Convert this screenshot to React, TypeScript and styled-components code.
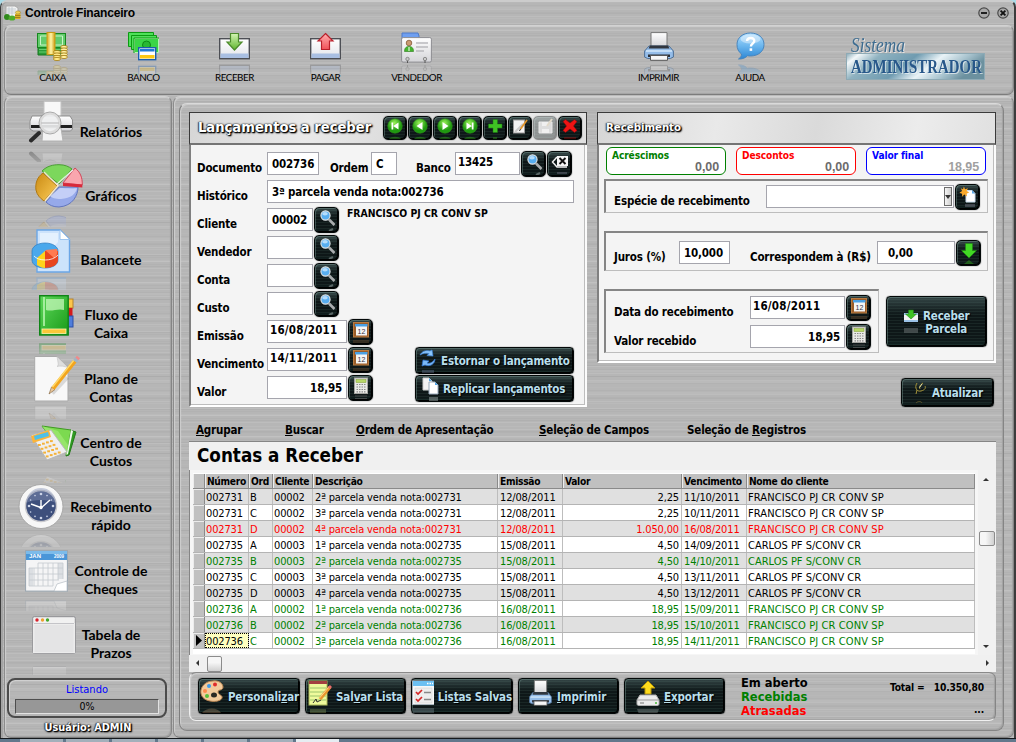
import React from 'react';
import styled, { createGlobalStyle, css } from 'styled-components';

const ui = `"DejaVu Sans Condensed", "DejaVu Sans", sans-serif`;

const metal = css`
  background-color: #b6b6b6;
  background-image: repeating-linear-gradient(180deg, rgba(255, 255, 255, 0.1) 0 1px, transparent 1px 3px, rgba(0, 0, 0, 0.025) 3px 4px, transparent 4px 7px),
    repeating-linear-gradient(180deg, rgba(0, 0, 0, 0.035) 0 1px, transparent 1px 5px, rgba(255, 255, 255, 0.06) 5px 7px, transparent 7px 11px);
`;

const bevel = css`
  border: 1px solid;
  border-color: #d2d2d2 #858585 #7c7c7c #8c8c8c;
  box-shadow: inset 1px 1px 1px #cfcfcf, inset -1px -1px 1px #a2a2a2;
`;

const GlobalStyle = createGlobalStyle`
  * { box-sizing: border-box; }
  body { margin: 0; background: #62788c; overflow: hidden; }
  svg { display: block; flex: none; }
`;

const Screen = styled.div`
  width: 1016px;
  height: 742px;
  background: #a9dbe8;
  font: 11px/13px ${ui};
  color: #000;
  white-space: nowrap;
`;

const Window = styled.div`
  ${metal}
  height: 738px;
  border: solid;
  border-width: 2px 2px 0 1px;
  border-color: #cccccc #3c3c3c #3c3c3c #3c3c3c;
  border-radius: 7px 7px 0 0;
  box-shadow: inset 2px 0 0 #a4a4a4;
  display: flex;
  flex-direction: column;
`;

const TitleBar = styled.header`
  height: 23px;
  flex: none;
  display: flex;
  align-items: center;
  padding: 0 5px 1px 3px;
  gap: 4px;
`;

const WindowTitle = styled.h1`
  flex: 1;
  margin: 0;
  font: bold 12px/14px 'Liberation Sans', sans-serif;
  letter-spacing: -0.18px;
`;

const CaptionButtons = styled.div`
  display: flex;
  gap: 7px;
`;

const ToolbarPanel = styled.nav`
  ${bevel}
  height: 70px;
  flex: none;
  margin: 0 0 1px 3px;
  border-radius: 7px;
  display: flex;
  padding: 6px 0 0 2px;
`;

const Tool = styled.div<{ $before?: number; $w?: number }>`
  width: ${(p) => p.$w ?? 91}px;
  margin-left: ${(p) => p.$before ?? 0}px;
  display: flex;
  flex-direction: column;
  align-items: center;
  font: 9.8px/12px Lato, sans-serif;
  letter-spacing: -0.45px;
`;

const ToolIcon = styled.div`
  height: 39px;
`;

const Mirror = styled.div<{ $gap: number; $h: number }>`
  margin-top: ${(p) => p.$gap}px;
  height: ${(p) => p.$h}px;
  overflow: hidden;
  opacity: 0.33;
  mask-image: linear-gradient(#000, rgba(0, 0, 0, 0.45));
  svg {
    transform: scaleY(-1);
  }
`;

const LogoBox = styled.div`
  margin: 3px 0 0 50px;
`;

const LogoArt = styled.svg`
  overflow: visible;
  text {
    font-family: 'Liberation Serif', serif;
    filter: drop-shadow(1px 1px 0 rgba(255, 255, 255, 0.6));
  }
`;

const Body = styled.div`
  display: flex;
  flex: 1;
`;

const Sidebar = styled.aside`
  ${bevel}
  width: 169px;
  margin-left: 3px;
  border-radius: 7px;
  padding-top: 3px;
`;

const SideItem = styled.div`
  height: 64px;
  display: grid;
  grid-template-columns: 61px 90px;
`;

const SideIcon = styled.div<{ $x: number; $y: number }>`
  margin: ${(p) => p.$y}px 0 0 ${(p) => p.$x}px;
`;

const SideLabel = styled.div`
  font: bold 14px/18px Lato, sans-serif;
  letter-spacing: -0.02px;
  text-align: center;
  align-self: center;
  white-space: pre-line;
`;

const StatusBox = styled.div`
  width: 160px;
  height: 40px;
  margin: 2px 0 0 2px;
  border: 2px solid #4b4b4b;
  border-radius: 8px;
  padding: 3px 6px;
  text-align: center;
  color: #0000ff;
  box-shadow: inset 1px 1px 0 #d0d0d0;
`;

const Progress = styled.div`
  margin-top: 3px;
  height: 15px;
  background: #979797;
  border: 1px solid;
  border-color: #4e4e4e #e2e2e2 #e2e2e2 #4e4e4e;
  color: #000;
  font-size: 10.5px;
`;

const glow = css`
  color: #fff;
  text-shadow: 1px 1px 1px #000, 1px 1px 2px #000, 0 0 2px #222, -1px 0 1px #555;
`;

const UserLine = styled.div`
  ${glow}
  margin-top: 3px;
  font-size: 10.9px;
  font-weight: bold;
  text-align: center;
`;

const Main = styled.main`
  ${bevel}
  margin-left: 1px;
  flex: 1;
  border-radius: 7px;
  padding: 6px 9px 6px 5px;
`;

const Frame = styled.section`
  ${bevel}
  height: 628px;
  border-color: #dadada #858585 #858585 #7d7d7d;
  border-radius: 8px;
  padding: 8px 7px 0 9px;
`;

const Upper = styled.div`
  display: flex;
  gap: 10px;
  height: 311px;
`;

const RightColumn = styled.div`
  width: 399px;
  display: flex;
  flex-direction: column;
`;

const Panel = styled.section<{ $w: number; $h: number }>`
  width: ${(p) => p.$w}px;
  height: ${(p) => p.$h}px;
  background: #f4f4f4;
  border: solid;
  border-width: 0 2px 2px 2px;
  border-color: #fff #fbfbfb #fff #808080;
  box-shadow: inset -1px -1px 0 #bdbdbd;
`;

const PanelHeader = styled.header<{ $size: number; $lift?: number }>`
  height: 33px;
  margin: 0 -2px 0 -2px;
  display: flex;
  align-items: center;
  padding: 0 4px 1px 8px;
  background: linear-gradient(100deg, #d6d6d6, #e9e9e9 30%, #dadada 55%, #ececec 80%, #e0e0e0);
  border: 1px solid #3a3a3a;
  border-bottom: 2px solid #747474;
  h2 {
    ${glow}
    margin: 0;
    flex: 1;
    padding-bottom: ${(p) => p.$lift ?? 0}px;
    font: bold ${(p) => p.$size}px/17px ${ui};
  }
`;

const dark = css`
  border: 1px solid #030808;
  background: linear-gradient(180deg, rgba(110, 140, 140, 0.4), rgba(60, 80, 80, 0.16) 28%, transparent 38%, transparent 84%, rgba(30, 80, 70, 0.22)),
    repeating-linear-gradient(180deg, #0e1718 0 2px, #192625 2px 3px);
  box-shadow: inset 1px 1px 0 rgba(120, 150, 145, 0.45), inset -1px -1px 0 #000, 0 0 1px #000;
`;

const NavButtons = styled.div`
  display: flex;
  gap: 1px;
`;

const IconButton = styled.div<{ $off?: boolean; $nav?: boolean }>`
  ${dark}
  width: ${(p) => (p.$nav ? 24 : 25)}px;
  height: ${(p) => (p.$nav ? 24 : 26)}px;
  flex: none;
  border-radius: 5px;
  display: flex;
  justify-content: center;
  padding-top: ${(p) => (p.$nav ? 0 : 1)}px;
  opacity: ${(p) => (p.$off ? 0.4 : 1)};
`;

const Form = styled.div`
  padding: 7px 0 0 6px;
`;

const FormRow = styled.div`
  height: 28px;
  display: flex;
`;

const Label = styled.label<{ $w: number; $left?: number }>`
  width: ${(p) => p.$w}px;
  margin-left: ${(p) => p.$left ?? 0}px;
  padding-top: 10px;
  font-weight: bold;
  font-size: 11.5px;
  letter-spacing: -0.17px;
  flex: none;
`;

const Field = styled.div<{ $w: number; $right?: boolean; $date?: boolean; $pad?: number; $up?: boolean }>`
  width: ${(p) => p.$w}px;
  height: 23px;
  flex: none;
  background: #fff;
  border: 1px solid #a5a5ad;
  font-weight: bold;
  font-size: 11.5px;
  line-height: ${(p) => (p.$date || p.$up ? 19 : 22)}px;
  letter-spacing: ${(p) => (p.$date ? 0.23 : -0.17)}px;
  padding: 0 ${(p) => (p.$right ? 4 : 0)}px 0 ${(p) => p.$pad ?? (p.$date ? 2 : 4)}px;
  text-align: ${(p) => (p.$right ? 'right' : 'left')};
`;

const FieldButton = styled(IconButton)`
  margin: -1px 0 0 1px;
`;

const ClientName = styled.div`
  margin: -1px 0 0 8px;
  font-weight: bold;
  font-size: 10.35px;
`;

const ActionRow = styled.div<{ $inset?: number }>`
  display: flex;
  justify-content: flex-end;
  flex: 1;
  padding-right: ${(p) => p.$inset ?? 0}px;
`;

const TextButton = styled.div<{ $w: number; $h: number; $gap?: number; $left?: number; $top?: number }>`
  ${dark}
  width: ${(p) => p.$w}px;
  height: ${(p) => p.$h}px;
  flex: none;
  margin-top: ${(p) => p.$top ?? 0}px;
  border-radius: 4px;
  display: flex;
  align-items: center;
  gap: ${(p) => p.$gap ?? 4}px;
  padding-left: ${(p) => p.$left ?? 4}px;
  color: #b9dfec;
  font-weight: bold;
  font-size: 11.5px;
  letter-spacing: -0.17px;
  text-shadow: 1px 1px 1px #000;
  text-align: center;
  white-space: pre;
  > span {
    padding-top: 2px;
  }
`;

const Totals = styled.div`
  display: flex;
  gap: 10px;
  padding: 2px 0 0 7px;
`;

const TotalBox = styled.div<{ $c: string; $muted?: boolean }>`
  width: 120px;
  height: 28px;
  border: 1px solid ${(p) => p.$c};
  border-radius: 6px;
  background: #fff;
  padding: 1px 6px 0 5px;
  color: ${(p) => p.$c};
  font: bold 10.1px/13px ${ui};
  letter-spacing: -0.1px;
  output {
    display: block;
    text-align: right;
    margin-top: -2px;
    font: bold 12.5px/14px 'Liberation Sans', sans-serif;
    color: ${(p) => (p.$muted ? '#a0a0a0' : '#6c6c6c')};
  }
`;

const GroupBox = styled.div<{ $w: number; $h: number; $mt: number; $pt: number }>`
  width: ${(p) => p.$w}px;
  height: ${(p) => p.$h}px;
  margin: ${(p) => p.$mt}px 0 0 5px;
  padding: ${(p) => p.$pt}px 0 0 8px;
  border: 2px solid;
  border-width: 2px 1px 1px 2px;
  border-color: #858585 #bdbdbd #bdbdbd #858585;
`;

const GroupRow = styled.div<{ $h?: number }>`
  display: flex;
  height: ${(p) => p.$h ?? 25}px;
`;

const SelectArrow = styled.div`
  width: 8px;
  height: 19px;
  margin: 1px 1px 0 auto;
  border: 1px solid #6d6d6d;
  background: linear-gradient(90deg, #f5f5f5, #cfcfcf);
  display: flex;
  align-items: center;
  justify-content: center;
`;

const Combo = styled(Field)`
  display: flex;
`;

const ReceiveRow = styled.div`
  display: flex;
  gap: 7px;
`;

const MenuBar = styled.nav`
  height: 18px;
  display: flex;
  margin: 0 0 0 7px;
  padding-top: 1px;
  font-weight: bold;
  font-size: 11.5px;
  letter-spacing: -0.17px;
`;

const MenuItem = styled.div<{ $w: number }>`
  width: ${(p) => p.$w}px;
`;

const GridPanel = styled.section`
  height: 231px;
  width: 807px;
  background: #f0f0f0;
  border-top: 1px solid #858585;
  display: flex;
  flex-direction: column;
  h3 {
    margin: 0;
    height: 28px;
    padding: 2px 0 0 8px;
    font: bold 18.7px/24px ${ui};
  }
`;

const GridArea = styled.div`
  display: flex;
  height: 185px;
`;

const Table = styled.div`
  width: 789px;
  padding: 3px 3px 0 3px;
  border-left: 1px solid #858585;
  background: #f6f6f6;
`;

const cols = '12px 44px 24px 40px 185px 65px 119px 65px 228px';

const HeadRow = styled.div`
  display: grid;
  grid-template-columns: ${cols};
  height: 16px;
  background: #c0c0c0;
  border-top: 1px solid #fff;
  border-bottom: 1px solid #8a8a8a;
  font-weight: bold;
  font-size: 10.2px;
  line-height: 15px;
  letter-spacing: -0.3px;
  span {
    padding-left: 2px;
    height: 14px;
    border-right: 1px solid #8a8a8a;
    box-shadow: inset 1px 0 0 #ededed;
  }
`;

const DataRow = styled.div<{ $tone: string; $alt: boolean }>`
  display: grid;
  grid-template-columns: ${cols};
  height: 16px;
  background: ${(p) => (p.$alt ? '#e0e0e0' : '#fff')};
  border-bottom: 1px solid #b4b4b4;
  color: ${(p) => p.$tone};
  line-height: 18px;
`;

const Cell = styled.span<{ $ls?: number; $right?: boolean; $active?: boolean; $pad?: number }>`
  height: 15px;
  padding: 0 2px 0 ${(p) => p.$pad ?? 1}px;
  border-right: 1px solid #bdbdbd;
  letter-spacing: ${(p) => p.$ls ?? -0.15}px;
  text-align: ${(p) => (p.$right ? 'right' : 'left')};
  ${(p) => p.$active && css`
    background: #ffffc0;
    color: #000;
    outline: 1px dotted #000;
    outline-offset: -1px;
  `}
`;

const RowMarker = styled.span`
  background: #c0c0c0;
  border-right: 1px solid #8a8a8a;
  box-shadow: inset 1px 1px 0 #ececec;
  padding: 2px 0 0 3px;
`;

const TableTail = styled.div`
  height: 5px;
  background: #fff;
`;

const VScroll = styled.div`
  width: 17px;
  background: #f1f1f1;
  display: flex;
  flex-direction: column;
  align-items: center;
  padding: 6px 0 5px;
`;

const Thumb = styled.div<{ $v?: boolean }>`
  width: ${(p) => (p.$v ? 16 : 15)}px;
  height: ${(p) => (p.$v ? 15 : 16)}px;
  border: 1px solid #8b8b8b;
  border-radius: 2px;
  background: linear-gradient(${(p) => (p.$v ? 90 : 180)}deg, #f6f6f6 40%, #d0d0d0);
`;

const HScroll = styled.div`
  height: 17px;
  display: flex;
  align-items: center;
  padding: 0 5px;
  gap: 6px;
`;

const Spacer = styled.div<{ $h?: number }>`
  flex: ${(p) => (p.$h ? 'none' : 1)};
  height: ${(p) => (p.$h ? `${p.$h}px` : 'auto')};
`;

const Footer = styled.footer`
  ${bevel}
  height: 49px;
  width: 807px;
  border-radius: 7px;
  border-color: #8a8a8a #858585 #f0f0f0 #eee;
  display: flex;
  gap: 5px;
  padding: 5px 11px 0 8px;
`;

const FooterButton = styled(TextButton)`
  letter-spacing: -0.12px;
`;

const FooterIcon = styled.div<{ $w: number }>`
  width: ${(p) => p.$w}px;
  height: 34px;
  overflow: hidden;
  align-self: flex-start;
  padding-top: 1px;
`;

const Legend = styled.div`
  margin: -2px 0 0 11px;
  font: bold 11.5px/14px 'DejaVu Sans', sans-serif;
  div:nth-child(2) { color: #008000; }
  div:nth-child(3) { color: #ff0000; }
`;

const Summary = styled.div`
  margin-left: auto;
  font: bold 10.2px/14px ${ui};
  letter-spacing: -0.15px;
  text-align: right;
  padding-top: 3px;
  white-space: pre;
`;

const Dots = styled.div`
  margin-top: 8px;
`;

const Taskbar = styled.div`
  height: 4px;
  background: #62788c;
  border-top: 1px solid #15191d;
  display: flex;
  gap: 3px;
  padding-left: 20px;
`;

const Task = styled.div<{ $on?: boolean }>`
  width: 43px;
  height: 3px;
  background: ${(p) => (p.$on ? '#e6edf2' : '#a3b0bb')};
`;

/* ---------- icons ---------- */

const DefsSvg = styled.svg`
  position: absolute;
`;

const Gradients = () => (
  <DefsSvg width="0" height="0">
    <defs>
      <linearGradient id="tray" x2="0" y2="1"><stop stopColor="#fff" /><stop offset="1" stopColor="#e2e4ea" /></linearGradient>
      <linearGradient id="gGreen" x2="0" y2="1"><stop stopColor="#d4f5b4" /><stop offset="1" stopColor="#5fb52c" /></linearGradient>
      <linearGradient id="gRed" x2="0" y2="1"><stop stopColor="#ffb0b0" /><stop offset="1" stopColor="#f05058" /></linearGradient>
      <linearGradient id="gBlue" x2="0" y2="1"><stop stopColor="#b4e0ff" /><stop offset=".5" stopColor="#6bb6ee" /><stop offset="1" stopColor="#2c86d4" /></linearGradient>
      <linearGradient id="gold" x2="1" y2="0"><stop stopColor="#d9a71c" /><stop offset=".5" stopColor="#fff6a8" /><stop offset="1" stopColor="#cc9a10" /></linearGradient>
      <linearGradient id="paper" x2="0" y2="1"><stop stopColor="#fff" /><stop offset="1" stopColor="#d4d4d8" /></linearGradient>
      <linearGradient id="book" x2="1" y2="1"><stop stopColor="#5ed85a" /><stop offset="1" stopColor="#189a18" /></linearGradient>
      <linearGradient id="amber" x2="1" y2="1"><stop stopColor="#c98a14" /><stop offset=".6" stopColor="#e8b23c" /><stop offset="1" stopColor="#f6cf6c" /></linearGradient>
      <radialGradient id="ball" cx=".45" cy=".3"><stop stopColor="#9cf25a" /><stop offset="1" stopColor="#1f9a10" /></radialGradient>
    </defs>
  </DefsSvg>
);

const AppIcon = () => (
  <svg width="17" height="16" viewBox="0 0 17 16">
    <path d="M2 1h9l3 2v9H2z" fill="#f2f2f2" stroke="#aaa" />
    <path d="M3 4h9M3 6h9M3 8h9M5 2v8M8 2v8" stroke="#b9c3cc" strokeWidth=".7" />
    <ellipse cx="3" cy="12" rx="3" ry="3" fill="#2f8a1c" /><ellipse cx="8" cy="13" rx="3.4" ry="2.6" fill="#4fae2b" />
    <ellipse cx="14" cy="7.500" rx="2.600" ry="1.6" fill="#f0d050" stroke="#9a7a10" strokeWidth=".5" />
    <rect x="11" y="9" width="5.500" height="5" fill="#d8ae28" /><path d="M11 10.500h5.500M11 12.500h5.500" stroke="#8f6c10" strokeWidth=".7" />
  </svg>
);

const Minimize = () => (
  <svg width="12" height="12" viewBox="0 0 12 12"><circle cx="6" cy="6" r="5.200" fill="#a9a9a9" stroke="#4a4a4a" strokeWidth="1.200" /><path d="M3 6h6" stroke="#111" strokeWidth="1.800" /></svg>
);
const Close = () => (
  <svg width="12" height="12" viewBox="0 0 12 12"><circle cx="6" cy="6" r="5.200" fill="#a9a9a9" stroke="#4a4a4a" strokeWidth="1.200" /><path d="M3.600 3.600l4.800 4.800M8.400 3.600L3.600 8.400" stroke="#111" strokeWidth="1.800" /></svg>
);

const Cash = () => (
  <svg width="31" height="29" viewBox="0 0 31 29">
    <path d="M1 15h27v8H1z" fill="#2a9c3a" stroke="#17771f" /><path d="M2 17.500h25M2 20h25" stroke="#66cf6e" />
    <rect x=".5" y="1.500" width="28" height="14" fill="#63cc6d" stroke="#17871f" />
    <path d="M3.500 4h22v9h-22z" fill="none" stroke="#c9f3c6" />
    <rect x="10" y=".5" width="8" height="22" fill="url(#gold)" stroke="#c99b17" />
    {[20, 22.500, 25, 27].map((y) => <ellipse key={y} cx="20" cy={y} rx="3.600" ry="1.600" fill="#ffe987" stroke="#a57c12" strokeWidth=".8" />)}
    {[15, 17.500, 20, 22.500, 25].map((y) => <ellipse key={y} cx="27" cy={y} rx="3.400" ry="1.600" fill="#fff0a0" stroke="#a57c12" strokeWidth=".8" />)}
  </svg>
);

const Bank = () => (
  <svg width="31" height="29" viewBox="0 0 31 29">
    {[[0.5, 0.5], [3.500, 3.500]].map(([x, y]) => <path key={x} d={`M${x} ${y}h25v14h-25z`} fill="#4fe05a" stroke="#0c9a12" />)}
    <path d="M6.500 6.500h24v14h-24z" fill="#3bd546" stroke="#b6f5b4" />
    <path d="M6 21V6h25" fill="none" stroke="#0c9a12" />
    <circle cx="18.500" cy="13" r="4" fill="#28b832" stroke="#0b8a14" />
    <rect x="10.700" y="15.700" width="17" height="12" fill="#fff" stroke="#1c5fae" strokeWidth="1.400" />
    <rect x="12" y="17" width="14.500" height="2.500" fill="#1e79d6" /><rect x="12" y="23" width="14.500" height="3.500" fill="#fcc713" />
  </svg>
);

const Tray = ({ up }: { up?: boolean }) => (
  <svg width="31" height="28" viewBox="0 0 31 28">
    <rect x=".7" y="6.700" width="29.600" height="20" fill="url(#tray)" stroke="#4d4f55" strokeWidth="1.400" />
    <rect x="1.500" y="21.500" width="28" height="4.500" fill="#a9bfe2" />
    {up
      ? <path d="M15.500 1.500l7.500 7.500h-3.500v8.500h-8V9H8z" fill="url(#gRed)" stroke="#b81f2a" strokeWidth="1.200" />
      : <path d="M11.500 1.500h8V10H23l-7.500 8L8 10h3.500z" fill="url(#gGreen)" stroke="#4b8a2a" strokeWidth="1.200" />}
  </svg>
);

const Badge = () => (
  <svg width="31" height="31" viewBox="0 0 31 31">
    <path d="M1 1h16l1 3v4H1z" fill="#6f9ff0" stroke="#4f7bc8" />
    <rect x=".6" y="5.600" width="29.800" height="24.500" rx="1.500" fill="url(#paper)" stroke="#8d8d92" />
    <circle cx="8" cy="11" r="2.800" fill="#c99a72" stroke="#7a4e2a" strokeWidth=".7" />
    <path d="M3.500 19.500c0-4 2-5 4.500-5s4.500 1 4.500 5z" fill="#45b52e" stroke="#2a7a1a" strokeWidth=".6" /><path d="M8 15v4" stroke="#fff" />
    <path d="M15 11h12M15 15h12M15 19h8" stroke="#b9b9bd" strokeWidth="1.300" />
    <path d="M6.500 31v-3M24 31v-3" stroke="#555" /><circle cx="6.500" cy="27" r="1.700" fill="#ccc" stroke="#777" strokeWidth=".8" /><circle cx="24" cy="27" r="1.700" fill="#ccc" stroke="#777" strokeWidth=".8" />
  </svg>
);

const Printer = ({ w = 30, h = 29 }: { w?: number; h?: number }) => (
  <svg width={w} height={h} viewBox="0 0 30 29" preserveAspectRatio="none">
    <path d="M7 .6h16V15H7z" fill="url(#paper)" stroke="#777" />
    <path d="M5 14h20l4.400 5v6l-3 1.500H3.600l-3-1.500v-6z" fill="#94bce8" stroke="#4f6f94" />
    <path d="M6 13.500h18l1.500 3h-21z" fill="#30363f" /><path d="M2 19h26" stroke="#d5e8fa" strokeWidth="1.500" />
    <path d="M4 22.500h22v2.500H4z" fill="#2b2f36" /><path d="M6.500 23.500h17v4.800h-17z" fill="#f6f6f6" stroke="#555" />
  </svg>
);

const Help = () => (
  <svg width="29" height="28" viewBox="0 0 29 28">
    <path d="M14.500 1C22 1 28 5.500 28 12.500S22 24 14.500 24c-1 0-2 0-3 -.3C9 26.500 6 27 2.500 27c2-1 3-3 3-5C2.500 20 1 16.500 1 12.500 1 5.500 7 1 14.500 1z" fill="url(#gBlue)" stroke="#4a86bd" />
    <ellipse cx="14.500" cy="7" rx="10" ry="4.500" fill="#fff" opacity=".4" />
    <path d="M11 9c.3-4 7.500-4 7.300 0-.2 2.600-3.400 2.800-3.400 5.500" fill="none" stroke="#fff" strokeWidth="2.400" /><rect x="13.600" y="16.300" width="2.600" height="2.600" fill="#fff" />
  </svg>
);

const Logo = () => (
  <LogoArt width="140" height="46" viewBox="0 0 140 46">
    <defs><linearGradient id="lg" x2="1" y2=".25">
      <stop stopColor="#7fa2b0" /><stop offset=".1" stopColor="#f3f8fa" /><stop offset=".25" stopColor="#8fb2c0" /><stop offset=".5" stopColor="#6f9bb0" />
      <stop offset=".68" stopColor="#e9f3f7" /><stop offset=".85" stopColor="#a9c4cf" /><stop offset="1" stopColor="#6c919f" />
    </linearGradient></defs>
    <rect x="0" y="18" width="139" height="27" fill="url(#lg)" />
    <rect x=".5" y="18.500" width="138" height="26" fill="none" stroke="#8eaab5" />
    <text x="5" y="17" textLength="54" lengthAdjust="spacingAndGlyphs" fontStyle="italic" fontSize="20" fill="#3d6c90">Sistema</text>
    <text x="5" y="37.500" textLength="131" lengthAdjust="spacingAndGlyphs" fontWeight="bold" fontSize="19" fill="#28588a">ADMINISTRADOR</text>
  </LogoArt>
);

const Reports = () => (
  <svg width="46" height="42" viewBox="0 0 46 42">
    <path d="M16 .5h17V20H16z" fill="#f8f8f8" stroke="#c4c4c4" />
    <path d="M4 15h38l2.500 4v9l-2 2H5l-3-2V20z" fill="url(#paper)" stroke="#8f8f8f" />
    <path d="M3 24h41v3H3z" fill="#1f1f1f" />
    <path d="M15 27h18l2 13H14z" fill="#f3f3f3" stroke="#b4b4b4" />
    <circle cx="22" cy="22" r="9.500" fill="#eef0f1" fillOpacity=".9" stroke="#dcdcdc" strokeWidth="2.500" /><circle cx="22" cy="22" r="11" fill="none" stroke="#8c8c8c" strokeWidth=".7" />
    <path d="M13 22h18" stroke="#b5b5b5" />
    <path d="M11 32L3 39.500" stroke="#2b2b2b" strokeWidth="4" strokeLinecap="round" />
  </svg>
);

const Pie = () => (
  <svg width="48" height="44" viewBox="0 0 48 44">
    <path d="M22 22L8 9C2 13 0 20 1 26c1 5 4 8 8 11z" fill="url(#amber)" stroke="#b07812" />
    <path d="M24 20L7 7C12 2 18 .7 24 .7c6 0 10 2 13 4.300z" fill="#7cd75c" stroke="#4a9e34" />
    <path d="M24 23h19c0 8-5 19-19 20-6 0-10-2-13-5z" fill="#96a9ea" stroke="#6276bd" />
    <path d="M25 24c4 0 13 1 17 0-1 6-6 10-16 11-6 0-9-1-11-3z" fill="#d3dcfb" opacity=".75" />
    <path d="M28 19L40 4c5 4 7.500 9 7.300 17z" fill="#f9a6ae" stroke="#d0485a" /><path d="M28 19l19.300 1.500v3L28 22z" fill="#d8293a" />
    <path d="M22 20L38 6" stroke="#fff" strokeWidth="1.200" fill="none" opacity=".8" />
    <path d="M9 8l14 13.500L10 37" stroke="#fff2d0" strokeWidth="1.200" fill="none" opacity=".9" />
  </svg>
);

const Balance = () => (
  <svg width="40" height="44" viewBox="0 0 40 44">
    <path d="M6 1h23l9.500 9.500V43H6z" fill="#cde3fb" stroke="#6ba6e6" strokeWidth="1.400" /><path d="M29 1v9.500h9.500z" fill="#fff" stroke="#9cc4f0" />
    <path d="M9 4h18v9c-4 6-12 8-18 9z" fill="#eaf4ff" opacity=".8" />
    <path d="M1 22c0-4 5-8 13-8s13 4 13 8v9c0 5-6 8-13 8S1 36 1 31z" fill="#4aa8ec" stroke="#2a78bd" strokeWidth=".7" />
    <path d="M14 22L6 29v7c3 2 5 3 8 3z" fill="#ffd21c" /><path d="M14 22l13 0v9c0 5-6 8-13 8z" fill="#e8451f" />
    <path d="M14 21l12-1c1 4-1 8-3 9z" fill="#ff7a50" /><path d="M3 27c4 5 18 6 24-1" stroke="#fff" fill="none" opacity=".8" />
  </svg>
);

const Book = () => (
  <svg width="35" height="41" viewBox="0 0 35 41">
    <rect x="28" y="4" width="6" height="9" fill="#fcc54a" stroke="#b5822a" /><rect x="28" y="13" width="5.500" height="8" fill="#d41a1a" /><rect x="28" y="21" width="6" height="11" fill="#4f7ddb" stroke="#2b4fa5" />
    <rect x=".7" y=".7" width="28.500" height="39.300" fill="url(#book)" stroke="#0f8416" strokeWidth="1.400" />
    <path d="M5 2v29" stroke="#b8f5b0" strokeWidth="1.600" /><path d="M7 4h18v11c-6-2-12 2-18 0z" fill="#c6f8bb" opacity=".75" />
    <rect x="3" y="34" width="24" height="4.500" fill="#fbc838" stroke="#fff2b0" strokeWidth=".8" />
  </svg>
);

const Pencil = () => (
  <svg width="46" height="47" viewBox="0 0 46 47">
    <path d="M.7 1.500H23L34 12v34H.7z" fill="#f8f8f8" stroke="#a9a9a9" /><path d="M23 1.500c1 6 2 9 0 10 4-1 8 0 11 1z" fill="#dedede" stroke="#b9b9b9" strokeWidth=".5" />
    <path d="M18 38L33 22" stroke="#000" opacity=".12" strokeWidth="5" />
    <path d="M15 39l2.500-7 3.500 2.500z" fill="#e9c69a" stroke="#6b4a22" strokeWidth=".5" />
    <path d="M19 33.500L41 6" stroke="#f2a51e" strokeWidth="4.200" /><path d="M18.500 32L40 5" stroke="#ffd96a" strokeWidth="1.400" />
    <path d="M41 6.500l2-3" stroke="#9fb4c6" strokeWidth="4.500" /><path d="M43 4l1.500-2" stroke="#f08a8a" strokeWidth="4" />
  </svg>
);

const CostCenter = () => (
  <svg width="47" height="36" viewBox="0 0 47 36">
    <path d="M40 5l6 2-7 23-3 1z" fill="#2f9b22" stroke="#247a1a" />
    <path d="M12 1l29 4-4 24L20 12z" fill="#7cda50" stroke="#3f9a22" /><path d="M12 1l8 12 17 17 1-10-10-14z" fill="#a8ec7c" opacity=".6" /><path d="M41 5l2 1-5 23-1.500 1z" fill="#f2fbee" />
    <path d="M1 10l20-5 16 22-20 8z" fill="#efefef" stroke="#b8b8b8" />
    <path d="M1 11l18-6 2 7L3 18z" fill="#fbb43a" /><path d="M4 11l14-4 1 4-14 4z" fill="#4ec0e8" />
    {[0, 1, 2, 3].map((r) => [0, 1, 2, 3].map((c) => <rect key={`${r}${c}`} x={8 + c * 4 + r * 2.6} y={19 - c * 1.3 + r * 3.8} width="2.800" height="2" fill="#f4b23a" />))}
  </svg>
);

const Clock = () => (
  <svg width="46" height="45" viewBox="0 0 46 45">
    <circle cx="23" cy="22.500" r="22" fill="#f7f7f7" stroke="#a7a7a7" /><circle cx="23" cy="22" r="15.500" fill="#3d4f7c" stroke="#c8c8cc" strokeWidth="1.400" />
    <path d="M8 19a15 15 0 0130 0c-8-4-22-4-30 0z" fill="#8493b5" opacity=".45" />
    {Array.from({ length: 12 }, (_, i) => <circle key={i} cx={23 + 12 * Math.sin(i * Math.PI / 6)} cy={22 - 12 * Math.cos(i * Math.PI / 6)} r={i % 3 ? 0.8 : 1.3} fill="#cdd5e8" />)}
    <path d="M23 24v-8M24 24l-11-4M23 24l9-8" stroke="#fff" strokeWidth="1.400" /><circle cx="23" cy="23.500" r="1.700" fill="#fff" />
  </svg>
);

const Calendar = () => (
  <svg width="43" height="42" viewBox="0 0 43 42">
    <rect x=".6" y=".6" width="41.800" height="40.500" fill="#f5f5f6" stroke="#97a3ae" /><rect x="1" y="1" width="41" height="9" fill="#4a96d8" /><path d="M1 1h41v3H1z" fill="#7cbbea" />
    <text x="4" y="7.800" fontFamily="'Liberation Sans', sans-serif" fontWeight="bold" fontSize="6" fill="#fff">JAN</text>
    <text x="29" y="7.500" fontFamily="'Liberation Sans', sans-serif" fontWeight="bold" fontSize="4.500" fill="#fff">2009</text>
    <path d="M4 18h4v18H4zM33 13h5v16h-5z" fill="#dcdfe3" />
    <path d="M13 13h25M4 18h34M4 24h34M4 30h30M4 36h24M4 18v18M9 18v18M13 13v23M18 13v23M23 13v23M28 13v23M33 13v17M38 13v16" stroke="#c4c9cf" strokeWidth=".8" />
    <path d="M29 41l3-7 10-3v10z" fill="#fff" stroke="#b5bcc3" strokeWidth=".7" />
  </svg>
);

const Browser = () => (
  <svg width="44" height="38" viewBox="0 0 44 38">
    <rect x=".7" y=".7" width="42.600" height="36.500" rx="1.500" fill="#f1f1f1" stroke="#8f8f93" /><path d="M1 7h42v30H1z" fill="#ececec" /><path d="M2 7.500h40" stroke="#c4c4c8" />
    <rect x="2.500" y="9" width="39" height="27" fill="#e4e4e5" />
    <circle cx="5" cy="4" r="1.700" fill="#d8202a" /><circle cx="10.500" cy="4" r="1.700" fill="#f0a030" /><circle cx="15.500" cy="4" r="1.700" fill="#44a82a" />
  </svg>
);

const Search = () => (
  <svg width="20" height="22" viewBox="0 0 20 22">
    <path d="M12 10.500l5.500 5.500" stroke="#a9acae" strokeWidth="2.600" /><circle cx="8.500" cy="6.500" r="4.600" fill="#58aef0" stroke="#e4e9ec" strokeWidth="1.100" /><ellipse cx="8" cy="4.800" rx="2.800" ry="1.800" fill="#c4e5ff" opacity=".85" />
    <path d="M12 22l4-2" stroke="#5a6666" strokeWidth="2" />
  </svg>
);

const DateIcon = () => (
  <svg width="18" height="23" viewBox="0 0 18 23">
    <rect x="1.500" y="1.500" width="15" height="14.500" fill="#9a5c28" stroke="#b87a40" /><rect x="4" y="3.500" width="11" height="11" fill="#f5f5f5" /><path d="M3 3h12.500v2.500H3z" fill="#4aa0e4" />
    <text x="9.500" y="12.700" textAnchor="middle" fontFamily="'Liberation Sans', sans-serif" fontSize="7" fill="#334">12</text>
    <path d="M1 19h16v3H1z" fill="#7b4e2a" opacity=".35" />
  </svg>
);

const Calc = () => (
  <svg width="16" height="23" viewBox="0 0 16 23">
    <rect x="1.500" y="1" width="13" height="15.500" fill="#e9e9e6" stroke="#a4a4a0" /><rect x="3" y="2.500" width="10" height="3" fill="#b8d868" stroke="#7c9a30" strokeWidth=".5" />
    {[7.500, 10, 12.5, 14.8].map((y) => <path key={y} d={`M3.500 ${y}h9`} stroke="#888" strokeWidth="1.200" strokeDasharray="1.500 1" />)}
    <path d="M2 19h12M2 21.500h12" stroke="#666" opacity=".6" />
  </svg>
);

const Backspace = () => (
  <svg width="20" height="22" viewBox="0 0 20 22">
    <path d="M7 3h11v10H7z" fill="#f6f6f6" /><path d="M9.500 5l6 6M15.500 5l-6 6" stroke="#111" strokeWidth="1.900" />
    <path d="M7 4L2.500 9 7 14h10" stroke="#f0f0f0" strokeWidth="1.500" fill="none" /><path d="M7 20h10" stroke="#667" />
  </svg>
);

const Ball = ({ d }: { d: string }) => (
  <svg width="20" height="22" viewBox="0 0 20 22">
    <circle cx="10" cy="9" r="7.300" fill="url(#ball)" stroke="#2c8a18" strokeWidth=".6" /><path d={d} fill="#fff" /><path d="M4 22c2-3 10-3 12 0z" fill="#2c9a1a" opacity=".5" />
  </svg>
);

const Plus = () => <svg width="20" height="22" viewBox="0 0 20 22"><path d="M8 2.500h4.500V7H17v4h-4.500v4.500H8V11H3.500V7H8z" fill="#3fc224" stroke="#1c7a10" strokeWidth=".5" /><path d="M8 20h4v2H8z" fill="#2c8a1a" opacity=".5" /></svg>;
const Cross = () => <svg width="20" height="22" viewBox="0 0 20 22"><path d="M5.500 2.500L10 6l4.500-3.500 2.500 2L13.500 9l3.500 4.500-2.500 2L10 12l-4.500 3.500-2.500-2L6.500 9 3 4.500z" fill="#ee1414" stroke="#8a0606" strokeWidth=".5" /><path d="M4 20h12v2H4z" fill="#a01010" opacity=".4" /></svg>;
const Edit = () => <svg width="20" height="22" viewBox="0 0 20 22"><rect x="3.500" y="3" width="11" height="13" fill="#f2f2f2" stroke="#999" /><path d="M5 15l8-8" stroke="#ccc" strokeWidth="2" /><path d="M10.500 12L17 3" stroke="#e0942a" strokeWidth="1.800" /><path d="M10.500 12l-1 2" stroke="#333" /></svg>;
const Save = () => <svg width="20" height="22" viewBox="0 0 20 22"><path d="M4 5h13v11H4z" fill="#cfcfcf" stroke="#eee" /><path d="M7 5h6v4H7zM7 12h7v4H7z" fill="#fff" /><path d="M12 9l5-7" stroke="#dcc8a0" strokeWidth="2" /></svg>;

const Refresh = () => (
  <svg width="18" height="24" viewBox="0 0 18 24">
    <path d="M1 6C3 2 7 1 11 2l2-1 1 6-6-.5 2-2C7 4 4 4 1 6z" fill="#8cc6fa" stroke="#3f8ae4" strokeWidth=".7" />
    <path d="M16 10c0 5-5 8-10 6l-3 1 1-6 6 1-2 2c3 1 6-1 8-4z" fill="#7ab8f6" stroke="#2f74d4" strokeWidth=".7" />
    <path d="M3 21h12v3H3z" fill="#78a" opacity=".35" />
  </svg>
);
const Copy = () => <svg width="17" height="24" viewBox="0 0 17 24"><path d="M1 1h6l3 3v9H1z" fill="#f4f4f4" stroke="#cfcfcf" /><path d="M7 5h6l3 3v9H7z" fill="#fff" stroke="#9ab" /><path d="M7 1l3 3H7zM13 5l3 3h-3z" fill="#54a4e4" /><path d="M7 20h9v4H7z" fill="#99a5a5" opacity=".5" /></svg>;
const NewDoc = () => <svg width="20" height="22" viewBox="0 0 20 22"><path d="M8 4.500h6l3 3V16H8z" fill="#fff" stroke="#cde" /><path d="M14 4v3.500h3z" fill="#5aa8e8" /><path d="M6 0l1.300 3L10.500 2 9 5l3 1.500L9 8l.5 3L6.500 9 4 11.500 4 8 1 7l3-2L2.500 2 5 3z" fill="#f9a92c" transform="translate(.5 .5) scale(.9)" /><path d="M7 18h10v3H7z" fill="#889" opacity=".4" /></svg>;
const Down = () => <svg width="20" height="22" viewBox="0 0 20 22"><path d="M6.500 1.500h7v7h4L10 16 2.500 8.500h4z" fill="#42d824" stroke="#1d8a10" strokeWidth=".6" /><path d="M5 22l5-4 5 4z" fill="#2c8a1a" opacity=".6" /></svg>;
const ReceiveIcon = () => <svg width="16" height="25" viewBox="0 0 16 25"><path d="M1 4h14v9H1z" fill="#f4f4f4" /><path d="M1 4h14v2H1zM1 11h14v2H1z" fill="#9cc4e8" /><path d="M5.500 1h5v4h3L8 10 2.500 5h3z" fill="#3fc224" stroke="#1c7a10" strokeWidth=".5" /><path d="M1 19h14v5H1z" fill="#555e5e" opacity=".7" /></svg>;
const Swirl = () => <svg width="14" height="24" viewBox="0 0 14 24"><path d="M4 2c-3 5 0 9 4 8s5-3 4-5M10 2c-3 2-4 4-3 6M4 9l-1 4" fill="none" stroke="#a8963a" /><path d="M6.500 6.500L9 3" stroke="#eee6a8" /><path d="M3 22c2-2 5-2 6 0" stroke="#5c5428" fill="none" /></svg>;

const Palette = () => (
  <svg width="24" height="37" viewBox="0 0 24 37">
    <path d="M13 1c6-1 10 3 10 6 0 4-5 2-5 5s5 3 4 6-7 4-12 3C4 20 0 16 1 10 2 5 7 1 13 1z" fill="#f3cb9c" stroke="#b98552" />
    <circle cx="9" cy="6" r="2" fill="#3f9ae8" /><circle cx="15" cy="4.500" r="2" fill="#e02c2c" /><circle cx="5" cy="11" r="2" fill="#ff8a4c" /><circle cx="7" cy="16" r="2" fill="#56c03a" /><ellipse cx="14" cy="15" rx="3" ry="2.500" fill="#2c2a24" />
    <path d="M2 33c4-6 16-6 19 0v3H2z" fill="#c9a078" opacity=".3" />
  </svg>
);
const Notes = () => (
  <svg width="24" height="37" viewBox="0 0 24 37">
    <rect x="1" y="1" width="18" height="24" fill="#eefa9c" stroke="#aab858" /><rect x="1" y="1" width="18" height="3" fill="#a34040" />
    <path d="M2 8h16M2 12h16M2 16h16M2 20h16" stroke="#9cc46a" /><path d="M5 23l3-4 1 3 4-2" stroke="#333" fill="none" />
    <path d="M12 19L22 7" stroke="#e8962c" strokeWidth="3.500" /><path d="M11.500 18L21 7" stroke="#ffd88a" /><path d="M21 8l2-2" stroke="#e86c6c" strokeWidth="3" /><path d="M2 29h16v7H2z" fill="#9aa860" opacity=".35" />
  </svg>
);
const Checks = () => (
  <svg width="24" height="37" viewBox="0 0 24 37">
    <rect x=".5" y="1" width="22" height="23.500" fill="#f8f8f8" stroke="#a9b4bd" /><rect x="1" y="1" width="21" height="5" fill="#6cc0f2" /><path d="M15 3.500h6" stroke="#fff" strokeWidth="1.500" strokeDasharray="1.500 1" />
    <rect x="3" y="8" width="17" height="15" fill="#eee" stroke="#ccc" strokeWidth=".5" />
    <path d="M4 12l2 2 4-4M4 19l2 2 4-4" stroke="#d62828" strokeWidth="1.700" fill="none" /><path d="M12 12.500h7M12 19.500h7" stroke="#888" strokeWidth="1.300" /><path d="M1 28h21v8H1z" fill="#8a9aa4" opacity=".35" />
  </svg>
);
const Export = () => (
  <svg width="24" height="37" viewBox="0 0 24 37">
    <path d="M12 1l7 7h-4v6H9V8H5z" fill="#ffdc1c" stroke="#b89408" /><path d="M4 15h16l3 5v4c0 1-1 1.500-2 1.500H3c-1 0-2-.5-2-1.500v-4z" fill="#ececec" stroke="#b0b0b0" /><path d="M1 20h22" stroke="#999" /><path d="M4 23h4" stroke="#777" /><circle cx="20" cy="23" r="1" fill="#4ab83a" />
    <path d="M1 29h22c-1 3-2 6-4 7H5c-2-1-3-4-4-7z" fill="#8d9494" opacity=".4" />
  </svg>
);

const Arrow = ({ d }: { d: string }) => <svg width="7" height="7" viewBox="0 0 7 7"><path d={d} fill="#333" /></svg>;

/* ---------- data ---------- */

type Side = [string, React.ReactElement, number, number, number, number];
const side: Side[] = [
  ['Relatórios', <Reports />, 23, 1, 8, 11],
  ['Gráficos', <Pie />, 30, 0, 7, 12],
  ['Balancete', <Balance />, 26, 1, 4, 13],
  ['Fluxo de\nCaixa', <Book />, 34, 3, 7, 11],
  ['Plano de\nContas', <Pencil />, 29, -1, 3, 14],
  ['Centro de\nCustos', <CostCenter />, 25, 5, 14, 8],
  ['Recebimento\nrápido', <Clock />, 13, 0, 5, 13],
  ['Controle de\nCheques', <Calendar />, 20, 2, 8, 11],
  ['Tabela de\nPrazos', <Browser />, 27, 4, 12, 9],
];

const FR = 'FRANCISCO PJ CR CONV SP';
const CA = 'CARLOS PF S/CONV CR';
const K = '#000';
const G = '#008000';
const rows = [
  [K, '002731', 'B', '00002', '2', '12/08/2011', '2,25', '11/10/2011', FR],
  [K, '002731', 'C', '00002', '3', '12/08/2011', '2,25', '10/11/2011', FR],
  ['#ff0000', '002731', 'D', '00002', '4', '12/08/2011', '1.050,00', '16/08/2011', FR],
  [K, '002735', 'A', '00003', '1', '15/08/2011', '4,50', '14/09/2011', CA],
  [G, '002735', 'B', '00003', '2', '15/08/2011', '4,50', '14/10/2011', CA],
  [K, '002735', 'C', '00003', '3', '15/08/2011', '4,50', '13/11/2011', CA],
  [K, '002735', 'D', '00003', '4', '15/08/2011', '4,50', '13/12/2011', CA],
  [G, '002736', 'A', '00002', '1', '16/08/2011', '18,95', '15/09/2011', FR],
  [G, '002736', 'B', '00002', '2', '16/08/2011', '18,95', '15/10/2011', FR],
  [G, '002736', 'C', '00002', '3', '16/08/2011', '18,95', '14/11/2011', FR],
];

const ToolButton = ({ label, icon, before, w, gap = 4 }: { label: string; icon: React.ReactElement; before?: number; w?: number; gap?: number }) => (
  <Tool $before={before} $w={w}>
    <ToolIcon>
      {icon}
      <Mirror $gap={gap} $h={10}>{icon}</Mirror>
    </ToolIcon>
    {label}
  </Tool>
);

const Lookup = ({ label, value }: { label: string; value?: string }) => (
  <FormRow>
    <Label $w={70}>{label}</Label>
    <Field $w={46}>{value}</Field>
    <FieldButton><Search /></FieldButton>
    {value && <ClientName>{FR}</ClientName>}
  </FormRow>
);

export default function App() {
  return (
    <Screen>
      <GlobalStyle />
      <Gradients />
      <Window>
        <TitleBar>
          <AppIcon />
          <WindowTitle>Controle Financeiro</WindowTitle>
          <CaptionButtons><Minimize /><Close /></CaptionButtons>
        </TitleBar>
        <ToolbarPanel>
          <ToolButton label="CAIXA" icon={<Cash />} />
          <ToolButton label="BANCO" icon={<Bank />} />
          <ToolButton label="RECEBER" icon={<Tray />} />
          <ToolButton label="PAGAR" icon={<Tray up />} />
          <ToolButton label="VENDEDOR" icon={<Badge />} gap={2} />
          <ToolButton label="IMPRIMIR" icon={<Printer />} before={151} />
          <ToolButton label="AJUDA" icon={<Help />} w={92} />
          <LogoBox><Logo /></LogoBox>
        </ToolbarPanel>
        <Body>
          <Sidebar>
            {side.map(([label, icon, x, y, gap, h]) => (
              <SideItem key={label}>
                <SideIcon $x={x} $y={y}>
                  {icon}
                  <Mirror $gap={gap} $h={h}>{icon}</Mirror>
                </SideIcon>
                <SideLabel>{label}</SideLabel>
              </SideItem>
            ))}
            <StatusBox>
              Listando
              <Progress>0%</Progress>
            </StatusBox>
            <UserLine>Usuário: ADMIN</UserLine>
          </Sidebar>
          <Main>
            <Frame>
              <Upper>
                <Panel $w={398} $h={295}>
                  <PanelHeader $size={14.6} $lift={2}>
                    <h2>Lançamentos a receber</h2>
                    <NavButtons>
                      <IconButton $nav><Ball d="M6.500 5.500h1.700v7H6.500zM13.500 5.500v7L8.200 9z" /></IconButton>
                      <IconButton $nav><Ball d="M12.500 5v8L6.500 9z" /></IconButton>
                      <IconButton $nav><Ball d="M7.500 5v8l6-4z" /></IconButton>
                      <IconButton $nav><Ball d="M6.500 5.500v7L11.800 9zM11.800 5.500h1.700v7h-1.700z" /></IconButton>
                      <IconButton $nav><Plus /></IconButton>
                      <IconButton $nav><Edit /></IconButton>
                      <IconButton $nav $off><Save /></IconButton>
                      <IconButton $nav><Cross /></IconButton>
                    </NavButtons>
                  </PanelHeader>
                  <Form>
                    <FormRow>
                      <Label $w={70}>Documento</Label>
                      <Field $w={52}>002736</Field>
                      <Label $w={41} $left={11}>Ordem</Label>
                      <Field $w={26}>C</Field>
                      <Label $w={39} $left={19}>Banco</Label>
                      <Field $w={65} $pad={2} $up>13425</Field>
                      <FieldButton><Search /></FieldButton>
                      <FieldButton><Backspace /></FieldButton>
                    </FormRow>
                    <FormRow>
                      <Label $w={70}>Histórico</Label>
                      <Field $w={307}>3ª parcela venda nota:002736</Field>
                    </FormRow>
                    <Lookup label="Cliente" value="00002" />
                    <Lookup label="Vendedor" />
                    <Lookup label="Conta" />
                    <Lookup label="Custo" />
                    <FormRow>
                      <Label $w={70}>Emissão</Label>
                      <Field $w={80} $date>16/08/2011</Field>
                      <FieldButton><DateIcon /></FieldButton>
                    </FormRow>
                    <FormRow>
                      <Label $w={70}>Vencimento</Label>
                      <Field $w={80} $date>14/11/2011</Field>
                      <FieldButton><DateIcon /></FieldButton>
                      <ActionRow $inset={11}>
                        <TextButton $w={159} $h={27} $top={-1} $left={3}><Refresh /><span>Estornar o lançamento</span></TextButton>
                      </ActionRow>
                    </FormRow>
                    <FormRow>
                      <Label $w={70}>Valor</Label>
                      <Field $w={80} $right>18,95</Field>
                      <FieldButton><Calc /></FieldButton>
                      <ActionRow $inset={11}>
                        <TextButton $w={159} $h={27} $top={-1} $left={6}><Copy /><span>Replicar lançamentos</span></TextButton>
                      </ActionRow>
                    </FormRow>
                  </Form>
                </Panel>
                <RightColumn>
                  <Panel $w={399} $h={251}>
                    <PanelHeader $size={11.3}><h2>Recebimento</h2></PanelHeader>
                    <Totals>
                      <TotalBox $c="#008000">Acréscimos<output>0,00</output></TotalBox>
                      <TotalBox $c="#ff0000">Descontos<output>0,00</output></TotalBox>
                      <TotalBox $c="#0000ff" $muted>Valor final<output>18,95</output></TotalBox>
                    </Totals>
                    <GroupBox $w={384} $h={34} $mt={4} $pt={4}>
                      <GroupRow>
                        <Label $w={152}>Espécie de recebimento</Label>
                        <Combo $w={188}><SelectArrow><Arrow d="M0 2h6L3 6z" /></SelectArrow></Combo>
                        <FieldButton><NewDoc /></FieldButton>
                      </GroupRow>
                    </GroupBox>
                    <GroupBox $w={384} $h={40} $mt={18} $pt={8}>
                      <GroupRow>
                        <Label $w={65}>Juros (%)</Label>
                        <Field $w={51}>10,000</Field>
                        <Label $w={127} $left={20}>Correspondem à (R$)</Label>
                        <Field $w={78} $pad={10}>0,00</Field>
                        <FieldButton><Down /></FieldButton>
                      </GroupRow>
                    </GroupBox>
                    <ReceiveRow>
                      <GroupBox $w={275} $h={64} $mt={18} $pt={5}>
                        <GroupRow $h={29}>
                          <Label $w={136}>Data do recebimento</Label>
                          <Field $w={95} $date>16/08/2011</Field>
                          <FieldButton><DateIcon /></FieldButton>
                        </GroupRow>
                        <GroupRow>
                          <Label $w={136}>Valor recebido</Label>
                          <Field $w={95} $right>18,95</Field>
                          <FieldButton><Calc /></FieldButton>
                        </GroupRow>
                      </GroupBox>
                      <TextButton $w={101} $h={51} $top={25} $left={16}><ReceiveIcon /><span>{'Receber\nParcela'}</span></TextButton>
                    </ReceiveRow>
                  </Panel>
                  <Spacer $h={15} />
                  <ActionRow $inset={2}>
                    <TextButton $w={93} $h={29} $left={11} $gap={5}><Swirl /><span>Atualizar</span></TextButton>
                  </ActionRow>
                </RightColumn>
              </Upper>
              <MenuBar>
                <MenuItem $w={89}><u>A</u>grupar</MenuItem>
                <MenuItem $w={71}><u>B</u>uscar</MenuItem>
                <MenuItem $w={183}><u>O</u>rdem de Apresentação</MenuItem>
                <MenuItem $w={148}><u>S</u>eleção de Campos</MenuItem>
                <MenuItem $w={150}>Seleção de <u>R</u>egistros</MenuItem>
              </MenuBar>
              <GridPanel>
                <h3>Contas a Receber</h3>
                <GridArea>
                  <Table>
                    <HeadRow>
                      <span />
                      {['Número', 'Ord', 'Cliente', 'Descrição', 'Emissão', 'Valor', 'Vencimento', 'Nome do cliente'].map((h) => <span key={h}>{h}</span>)}
                    </HeadRow>
                    {rows.map(([tone, num, ord, cli, part, emi, val, ven, name], i) => (
                      <DataRow key={i} $tone={tone} $alt={i % 2 === 0}>
                        <RowMarker>{i === 9 && <svg width="6" height="11" viewBox="0 0 6 11"><path d="M0 0l6 5.500L0 11z" fill="#000" /></svg>}</RowMarker>
                        <Cell $active={i === 9}>{num}</Cell>
                        <Cell>{ord}</Cell>
                        <Cell>{cli}</Cell>
                        <Cell $pad={2}>{part}ª parcela venda nota:{num}</Cell>
                        <Cell $pad={2}>{emi}</Cell>
                        <Cell $right>{val}</Cell>
                        <Cell $pad={2}>{ven}</Cell>
                        <Cell $ls={name === FR ? 0.1 : 0}>{name}</Cell>
                      </DataRow>
                    ))}
                    <TableTail />
                  </Table>
                  <VScroll>
                    <Arrow d="M0 5h6L3 2z" />
                    <Spacer $h={48} />
                    <Thumb $v />
                    <Spacer />
                    <Arrow d="M0 2h6L3 5z" />
                  </VScroll>
                </GridArea>
                <HScroll>
                  <Arrow d="M5 0v6L2 3z" />
                  <Thumb />
                  <Spacer />
                  <Arrow d="M2 0v6l3-3z" />
                </HScroll>
              </GridPanel>
              <Footer>
                <FooterButton $w={102} $h={36} $left={1}><FooterIcon $w={24}><Palette /></FooterIcon><span>Personali<u>z</u>ar</span></FooterButton>
                <FooterButton $w={101} $h={36} $left={2}><FooterIcon $w={24}><Notes /></FooterIcon><span>Sal<u>v</u>ar Lista</span></FooterButton>
                <FooterButton $w={102} $h={36} $left={0}><FooterIcon $w={23}><Checks /></FooterIcon><span>Lis<u>t</u>as Salvas</span></FooterButton>
                <FooterButton $w={101} $h={36} $left={10}><FooterIcon $w={24}><Printer w={23} h={26} /></FooterIcon><span><u>I</u>mprimir</span></FooterButton>
                <FooterButton $w={101} $h={36} $left={11}><FooterIcon $w={24}><Export /></FooterIcon><span><u>E</u>xportar</span></FooterButton>
                <Legend><div>Em aberto</div><div>Recebidas</div><div>Atrasadas</div></Legend>
                <Summary>{'Total =   10.350,80'}<Dots>...</Dots></Summary>
              </Footer>
            </Frame>
          </Main>
        </Body>
      </Window>
      <Taskbar>
        <Task /><Task /><Task /><Task /><Task /><Task /><Task $on />
      </Taskbar>
    </Screen>
  );
}
